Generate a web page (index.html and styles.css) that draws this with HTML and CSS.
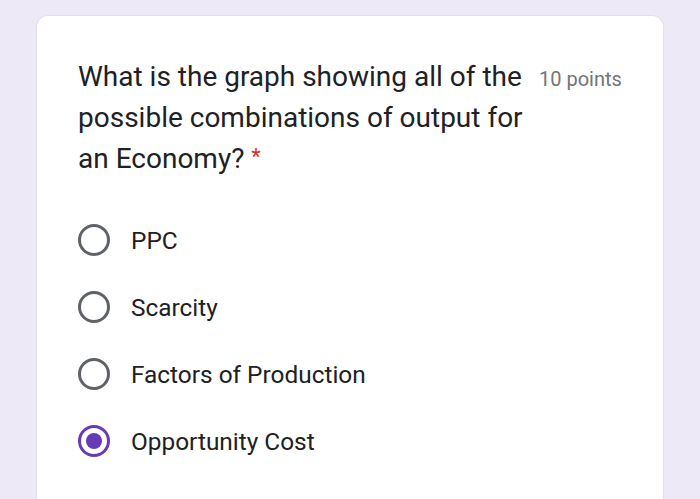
FILE: index.html
```html
<!DOCTYPE html>
<html>
<head>
<meta charset="utf-8">
<link rel="stylesheet" href="styles.css">
</head>
<body>
<div class="page">
  <div class="card">
    <div class="header">
      <div class="question">What is the graph showing all of the possible combinations of output for an Economy? <span class="req">*</span></div>
      <div class="points">10 points</div>
    </div>
    <div class="options">
      <div class="option"><span class="radio"></span><span class="label">PPC</span></div>
      <div class="option"><span class="radio"></span><span class="label">Scarcity</span></div>
      <div class="option"><span class="radio"></span><span class="label">Factors of Production</span></div>
      <div class="option"><span class="radio checked"></span><span class="label">Opportunity Cost</span></div>
    </div>
  </div>
</div>
</body>
</html>
```
FILE: styles.css
```css
html, body {
  margin: 0;
  padding: 0;
  background: #ede9f6;
  height: 100%;
  overflow: hidden;
}
.page {
  padding: 15px 36px 0 36px;
  height: 100%;
  box-sizing: border-box;
}
.card {
  background: #fff;
  border: 1px solid #e2dfe8;
  border-bottom: none;
  border-radius: 12px 12px 0 0;
  height: 100%;
  box-sizing: border-box;
  padding: 40px 41px 0 41px;
  font-family: Roboto, "Liberation Sans", sans-serif;
}
.header {
  display: flex;
  align-items: baseline;
}
.question {
  width: 448px;
  font-size: 28px;
  line-height: 41px;
  color: #202124;
}
.req {
  color: #d93025;
  font-size: 22px;
  vertical-align: 4px;
  line-height: 1;
}
.points {
  margin-left: 13px;
  font-size: 20px;
  line-height: 41px;
  color: #70757a;
  white-space: nowrap;
}
.options {
  margin-top: 45px;
  display: flex;
  flex-direction: column;
  gap: 35px;
}
.option {
  display: flex;
  align-items: center;
  height: 32px;
}
.radio {
  width: 32px;
  height: 32px;
  box-sizing: border-box;
  border: 3px solid #5f6368;
  border-radius: 50%;
  flex: none;
  position: relative;
}
.radio.checked {
  border-color: #673ab7;
}
.radio.checked::after {
  content: "";
  position: absolute;
  left: 5px;
  top: 5px;
  width: 16px;
  height: 16px;
  border-radius: 50%;
  background: #673ab7;
}
.label {
  margin-left: 21px;
  font-size: 24.4px;
  color: #202124;
}
```
